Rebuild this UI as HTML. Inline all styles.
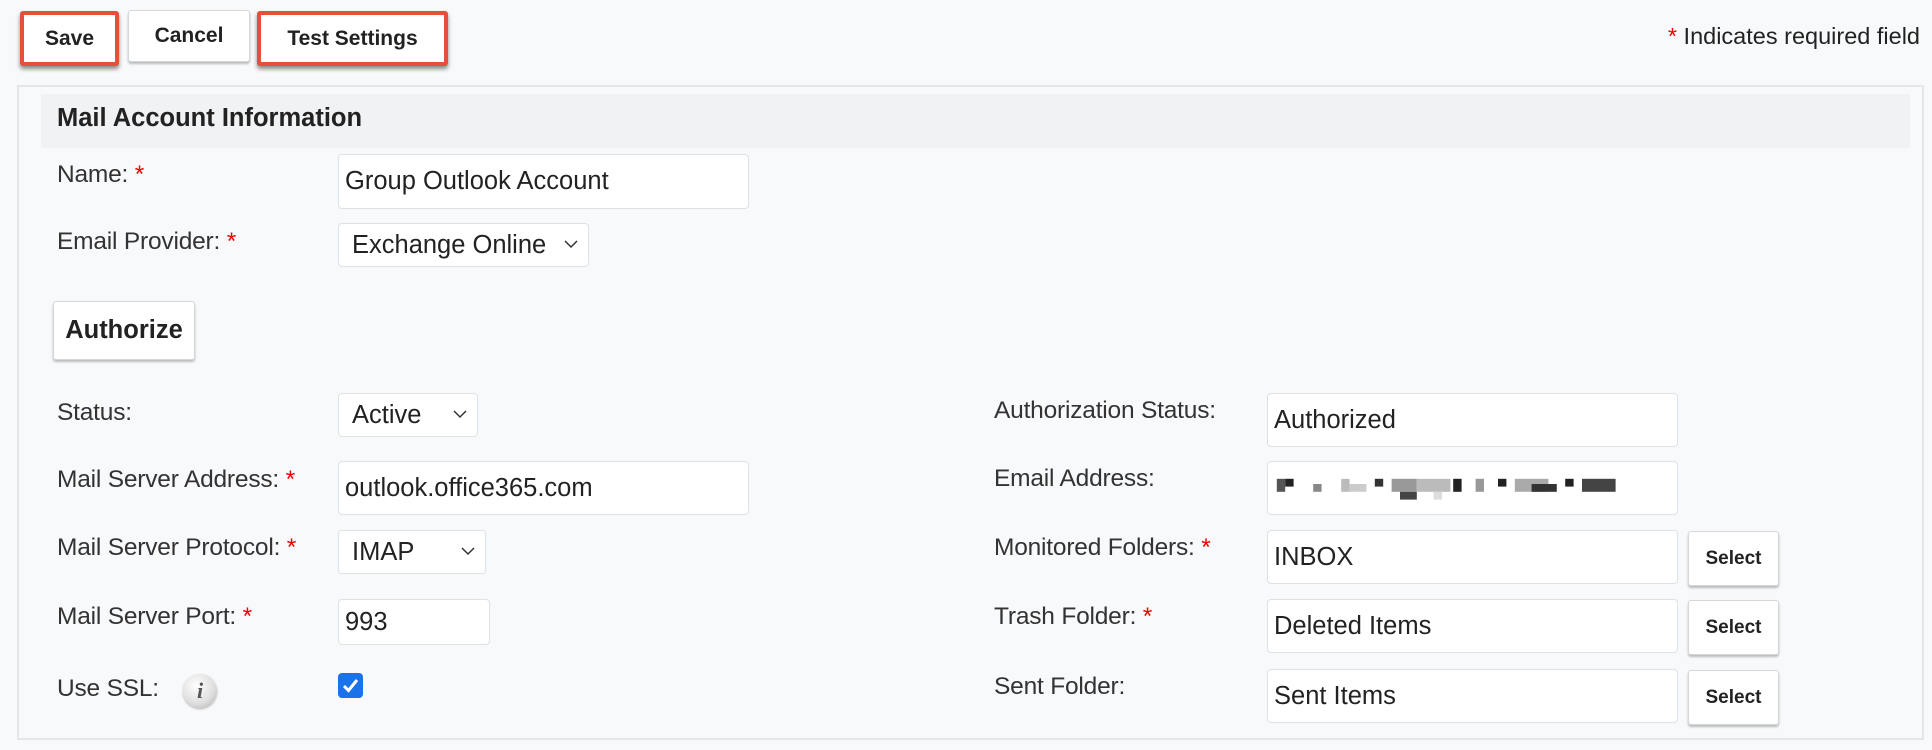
<!DOCTYPE html>
<html><head><meta charset="utf-8"><style>
*{box-sizing:border-box;margin:0;padding:0}
body{width:1932px;height:750px;background:#f8f9fb;font-family:"Liberation Sans",Arial,sans-serif;color:#222;position:relative;overflow:hidden}
.a{position:absolute}
.btn{position:absolute;background:#fff;border:1px solid #d4d8db;border-radius:3px;box-shadow:0 2px 2px rgba(0,0,0,.25);font-weight:bold;font-size:21px;display:flex;align-items:center;justify-content:center;color:#222}
.red{border:4px solid #e4503a;box-shadow:0 3px 4px rgba(0,0,0,.45)}
.lbl{position:absolute;font-size:24.5px;color:#333;transform:translateY(-50%);letter-spacing:-0.2px}
.lbl b{color:#e00;font-weight:normal}
.inp{position:absolute;background:#fff;border:1px solid #dde2e6;border-radius:4px;font-size:25.5px;display:flex;align-items:center;padding-left:6px;color:#222}
.sel{padding-left:13px}
.sel svg{position:absolute;right:10px;top:50%;margin-top:-5px}
.sb{font-size:19px}
</style></head><body>
<div class="btn red" style="left:20px;top:11px;width:99px;height:55px">Save</div>
<div class="btn" style="left:128px;top:10px;width:122px;height:52px">Cancel</div>
<div class="btn red" style="left:257px;top:11px;width:191px;height:55px">Test Settings</div>
<div class="a" style="right:12px;top:23px;font-size:23.5px;color:#222"><span style="color:#e00">*</span> Indicates required field</div>

<div class="a" style="left:17px;top:85px;width:1907px;height:655px;border:2px solid #e2e7e8"></div>
<div class="a" style="left:41px;top:94px;width:1869px;height:54px;background:#f0f2f4"></div>
<div class="a" style="left:57px;top:104px;font-size:25.5px;font-weight:bold;color:#222">Mail Account Information</div>

<div class="lbl" style="left:57px;top:175px">Name: <b>*</b></div>
<div class="inp" style="left:338px;top:154px;width:411px;height:55px">Group Outlook Account</div>
<div class="lbl" style="left:57px;top:242px">Email Provider: <b>*</b></div>
<div class="inp sel" style="left:338px;top:223px;width:251px;height:44px">Exchange Online<svg width="14" height="9"><path d="M1 1l6 6 6-6" fill="none" stroke="#333" stroke-width="1.5"/></svg></div>

<div class="btn" style="left:53px;top:301px;width:142px;height:59px;font-size:25.5px">Authorize</div>

<div class="lbl" style="left:57px;top:413px">Status:</div>
<div class="inp sel" style="left:338px;top:393px;width:140px;height:44px">Active<svg width="14" height="9"><path d="M1 1l6 6 6-6" fill="none" stroke="#333" stroke-width="1.5"/></svg></div>
<div class="lbl" style="left:57px;top:480px">Mail Server Address: <b>*</b></div>
<div class="inp" style="left:338px;top:461px;width:411px;height:54px">outlook.office365.com</div>
<div class="lbl" style="left:57px;top:548px">Mail Server Protocol: <b>*</b></div>
<div class="inp sel" style="left:338px;top:530px;width:148px;height:44px">IMAP<svg width="14" height="9"><path d="M1 1l6 6 6-6" fill="none" stroke="#333" stroke-width="1.5"/></svg></div>
<div class="lbl" style="left:57px;top:617px">Mail Server Port: <b>*</b></div>
<div class="inp" style="left:338px;top:599px;width:152px;height:46px">993</div>
<div class="lbl" style="left:57px;top:689px">Use SSL:</div>
<div class="a" style="left:183px;top:674px;width:34px;height:34px;border-radius:50%;background:radial-gradient(circle at 40% 35%,#fff,#ddd 60%,#aaa);box-shadow:0 1px 2px rgba(0,0,0,.3);font-family:'Liberation Serif',serif;font-style:italic;font-weight:bold;font-size:22px;color:#555;text-align:center;line-height:34px">i</div>
<div class="a" style="left:338px;top:673px;width:25px;height:25px;background:#1a73e8;border-radius:4px"><svg width="25" height="25"><path d="M6 13l4.5 4.5L19 7" fill="none" stroke="#fff" stroke-width="3"/></svg></div>

<div class="lbl" style="left:994px;top:411px">Authorization Status:</div>
<div class="inp" style="left:1267px;top:393px;width:411px;height:54px">Authorized</div>
<div class="lbl" style="left:994px;top:479px">Email Address:</div>
<div class="inp" style="left:1267px;top:461px;width:411px;height:54px"><svg width="350" height="34"><g transform="scale(1.4,1.3)"><rect x="2" y="6" width="6" height="10" fill="#555"/><rect x="8" y="6" width="6" height="6" fill="#222"/><rect x="28" y="10" width="6" height="6" fill="#888"/><rect x="48" y="6" width="6" height="10" fill="#bbb"/><rect x="54" y="10" width="12" height="6" fill="#ccc"/><rect x="72" y="6" width="6" height="6" fill="#333"/><rect x="84" y="6" width="18" height="10" fill="#999"/><rect x="90" y="16" width="12" height="6" fill="#444"/><rect x="102" y="6" width="24" height="10" fill="#bbb"/><rect x="114" y="16" width="6" height="6" fill="#ddd"/><rect x="128" y="6" width="6" height="10" fill="#222"/><rect x="144" y="6" width="6" height="10" fill="#999"/><rect x="160" y="6" width="6" height="6" fill="#222"/><rect x="172" y="6" width="24" height="10" fill="#aaa"/><rect x="184" y="10" width="18" height="6" fill="#333"/><rect x="208" y="6" width="6" height="6" fill="#222"/><rect x="220" y="6" width="24" height="10" fill="#444"/></g></svg></div>
<div class="lbl" style="left:994px;top:548px">Monitored Folders: <b>*</b></div>
<div class="inp" style="left:1267px;top:530px;width:411px;height:54px">INBOX</div>
<div class="btn sb" style="left:1688px;top:531px;width:91px;height:55px">Select</div>
<div class="lbl" style="left:994px;top:617px">Trash Folder: <b>*</b></div>
<div class="inp" style="left:1267px;top:599px;width:411px;height:54px">Deleted Items</div>
<div class="btn sb" style="left:1688px;top:600px;width:91px;height:55px">Select</div>
<div class="lbl" style="left:994px;top:687px">Sent Folder:</div>
<div class="inp" style="left:1267px;top:669px;width:411px;height:54px">Sent Items</div>
<div class="btn sb" style="left:1688px;top:670px;width:91px;height:55px">Select</div>
</body></html>
